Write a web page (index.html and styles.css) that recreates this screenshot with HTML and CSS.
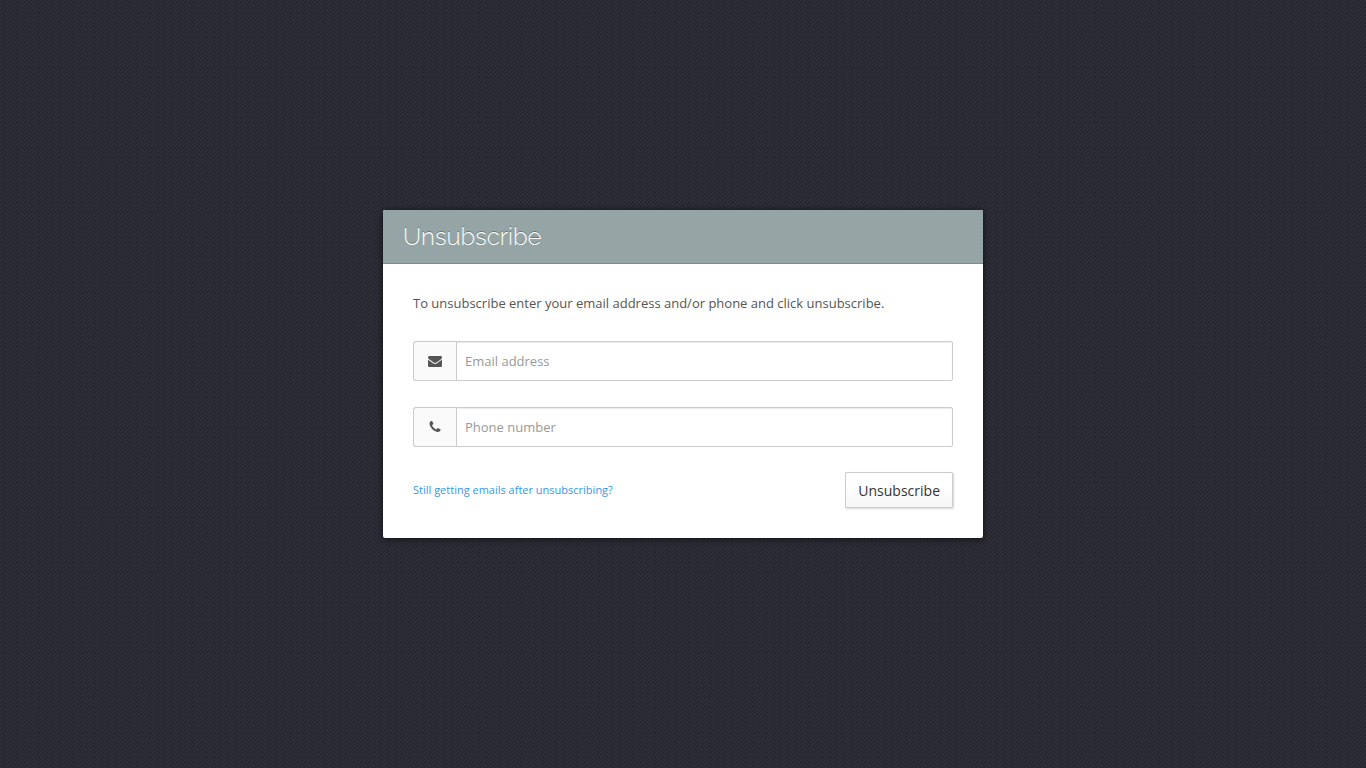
FILE: index.html
```
<!DOCTYPE html>
<html lang="en">
<head>
    <meta charset="UTF-8">
    <meta name="viewport" content="width=device-width, initial-scale=1.0">
    <title>Unsubscribe</title>
    <link rel="stylesheet" href="styles.css">
</head>
<body>

    <main class="panel">
        <header class="panel-header">
            <h1>Unsubscribe</h1>
        </header>

        <form class="panel-body">
            <p class="intro">To unsubscribe enter your email address and/or phone and click unsubscribe.</p>

            <div class="fields">
                <!-- Email -->
                <div class="input-group">
                    <label class="input-icon" for="email" aria-label="Email address">
                        <svg width="14" height="14" viewBox="0 0 1792 1792" fill="currentColor" aria-hidden="true">
                            <path d="M1792 710v794q0 66-47 113t-113 47H160q-66 0-113-47T0 1504V710q44 49 101 87 362 246 497 345 57 42 92.500 65.500t94.500 48 110 24.500h2q51 0 110-24.500t94.500-48 92.500-65.500q170-123 498-345 57-39 100-87zm0-294q0 79-49 151t-122 123q-376 261-468 325-10 7-42.500 30.500t-54 38-52 32.500-57.500 27-50 9h-2q-23 0-50-9t-57.500-27-52-32.500-54-38T639 1015q-91-64-262-182.500T172 690q-62-42-117-115.500T0 438q0-78 41.500-130T160 256h1472q65 0 112.500 47t47.500 113z"/>
                        </svg>
                    </label>
                    <input type="email" id="email" placeholder="Email address">
                </div>

                <!-- Phone -->
                <div class="input-group">
                    <label class="input-icon" for="phone" aria-label="Phone number">
                        <svg width="14" height="14" viewBox="0 0 1792 1792" fill="currentColor" aria-hidden="true">
                            <path d="M1600 1240q0 27-10 70.500t-21 68.500q-21 50-122 106-94 51-186 51-27 0-53-3.500t-57.500-12.500-47-14.500-55.500-20.500-49-18q-98-35-175-83-127-79-264-216T344 904q-48-77-83-175-3-9-18-49t-20.500-55.500-14.500-47-12.500-57.500-3.500-53q0-92 51-186 56-101 106-122 25-11 68.500-21t70.500-10q14 0 21 3 18 6 53 76 11 19 30 54t35 63.500 31 53.500q3 4 17.500 25t21.500 35.500 7 28.500q0 20-28.500 50t-62 55-62 53-28.500 46q0 9 5 22.500t8.500 20.500 14 24 11.500 19q76 137 174 235t235 174q2 1 19 11.500t24 14 20.500 8.500 22.500 5q18 0 46-28.500t53-62 55-62 50-28.500q14 0 28.500 7t35.500 21.500 25 17.500q25 15 53.500 31t63.500 35 54 30q70 35 76 53 3 7 3 21z"/>
                        </svg>
                    </label>
                    <input type="tel" id="phone" placeholder="Phone number">
                </div>
            </div>

            <!-- Actions -->
            <div class="actions">
                <a href="#">Still getting emails after unsubscribing?</a>
                <button type="submit" class="btn">Unsubscribe</button>
            </div>
        </form>
    </main>

</body>
</html>
```
FILE: styles.css
```
/* Global Styles */
* {
    box-sizing: border-box;
}

body {
    display: flex;
    align-items: center;
    justify-content: center;
    min-height: 100vh;
    margin: 0;
    padding: 0 20px 20px;
    font-family: "Open Sans", sans-serif;
    font-size: 13px;
    line-height: 20px;
    color: #555;
    background-color: #272732;
    background-image:
        linear-gradient(135deg, rgba(255, 255, 255, 0.04) 25%, transparent 25%, transparent 50%, rgba(255, 255, 255, 0.04) 50%, rgba(255, 255, 255, 0.04) 75%, transparent 75%),
        radial-gradient(circle, rgba(0, 0, 0, 0.06) 1px, transparent 2px),
        radial-gradient(circle, rgba(0, 0, 0, 0.06) 1px, transparent 2px);
    background-size: 4px 4px, 7px 5px, 11px 9px;
}

/* Panel */
.panel {
    width: 100%;
    max-width: 600px;
    background: #fff;
    border-radius: 2px;
    box-shadow: 0 1px 6px rgba(0, 0, 0, 0.7);
    overflow: hidden;
}

.panel-header {
    padding: 10px 20px;
    background: #95a5a5;
    border-bottom: 1px solid #7b8a8b;
}

.panel-header h1 {
    margin: 0;
    font-family: Raleway, Lato, sans-serif;
    font-size: 24px;
    font-weight: 300;
    line-height: 33px;
    color: #fff;
    text-shadow: 0 -1px 0 rgba(0, 0, 0, 0.3);
}

.panel-body {
    padding: 30px;
}

.intro {
    margin: 0 0 28px;
    line-height: 19px;
}

/* Inputs */
.fields {
    display: grid;
    gap: 26px;
    margin-bottom: 25px;
}

.input-group {
    display: flex;
    height: 40px;
}

.input-icon {
    display: flex;
    align-items: center;
    justify-content: center;
    width: 43px;
    background: #fafafa;
    border: 1px solid #ccc;
    border-right: none;
    border-radius: 3px 0 0 3px;
}

.input-group input {
    flex: 1;
    min-width: 0;
    padding: 0 8px;
    font: inherit;
    color: #555;
    background: #fff;
    border: 1px solid #ccc;
    border-radius: 0 2px 2px 0;
    box-shadow: inset 0 1px 1px rgba(0, 0, 0, 0.08);
}

.input-group input::placeholder {
    color: #999;
}

/* Actions */
.actions {
    display: flex;
    align-items: center;
    justify-content: space-between;
}

.actions a {
    font-size: 11px;
    color: #3498e8;
    text-decoration: none;
}

.btn {
    height: 36px;
    padding: 0 12px;
    font-family: inherit;
    font-size: 14px;
    color: #333;
    background: linear-gradient(#fff 40%, #f5f5f5);
    border: 1px solid #ccc;
    border-radius: 1px;
    box-shadow: 1px 1px 2px rgba(0, 0, 0, 0.15);
    cursor: pointer;
}
```
